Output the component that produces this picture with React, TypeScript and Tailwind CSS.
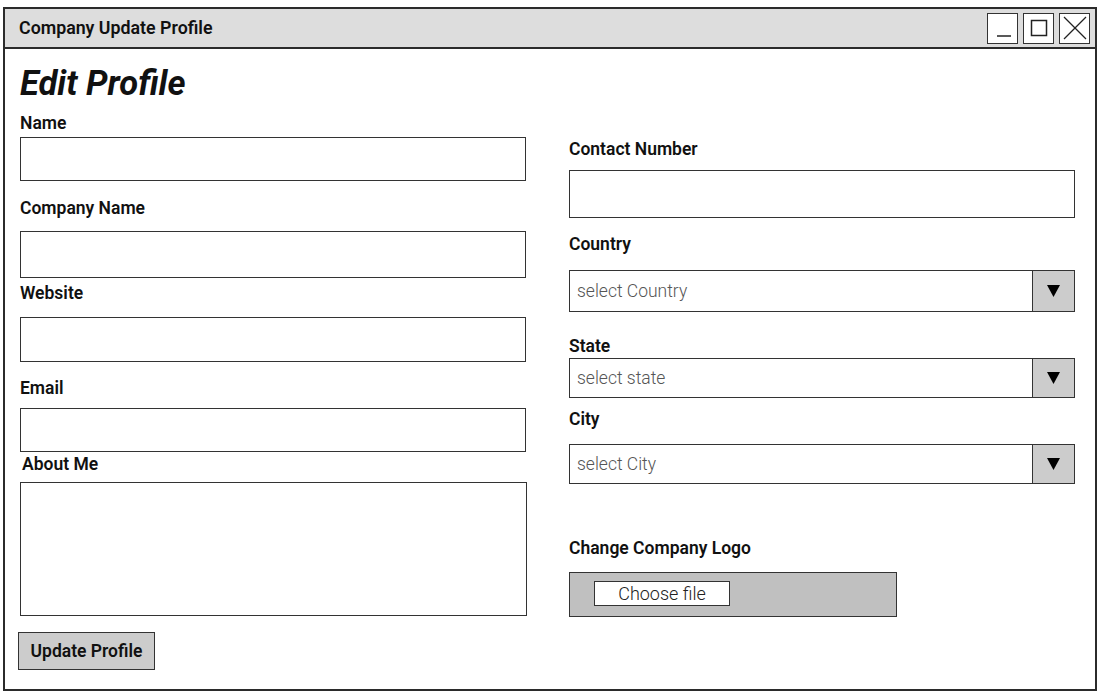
import React from "react";

const font = { fontFamily: "Roboto, 'Noto Sans', sans-serif" };

function Label({ children, className = "" }: { children: React.ReactNode; className?: string }) {
  return (
    <div className={"h-[20px] leading-[20px] text-[17.5px] font-semibold text-[#111] " + className}>
      {children}
    </div>
  );
}

function Select({ text, className = "" }: { text: string; className?: string }) {
  return (
    <div className={"flex border border-[#333] bg-white " + className}>
      <div className="flex-1 flex items-center pl-[7px] text-[17.5px] font-light text-[#555]">{text}</div>
      <div className="w-[42px] border-l border-[#333] bg-[#cccccc] flex items-center justify-center">
        <svg width="13" height="12" viewBox="0 0 13 12">
          <polygon points="0,0 13,0 6.5,12" fill="#000" />
        </svg>
      </div>
    </div>
  );
}

function WinBtn({ children }: { children: React.ReactNode }) {
  return (
    <div className="w-[31px] h-[31px] border-[1.5px] border-[#333] bg-white flex items-center justify-center">
      {children}
    </div>
  );
}

export default function App() {
  return (
    <div className="w-[1102px] h-[697px] bg-white overflow-hidden" style={font}>
      <div className="ml-[3px] mt-[7px] w-[1094px] h-[684px] border-2 border-[#2b2b2b] flex flex-col">
        <div className="h-[40px] bg-[#dddddd] border-b-2 border-[#2b2b2b] flex items-center pl-[14px] pr-[5px]">
          <div className="flex-1 text-[17.8px] font-semibold text-[#111]">Company Update Profile</div>
          <div className="flex gap-[5px]">
            <WinBtn>
              <svg width="28" height="28" viewBox="0 0 28 28">
                <line x1="8" y1="22" x2="22" y2="22" stroke="#222" strokeWidth="1.5" />
              </svg>
            </WinBtn>
            <WinBtn>
              <svg width="28" height="28" viewBox="0 0 28 28">
                <rect x="6.5" y="6.5" width="15" height="15" fill="none" stroke="#222" strokeWidth="1.5" />
              </svg>
            </WinBtn>
            <WinBtn>
              <svg width="28" height="28" viewBox="0 0 28 28">
                <line x1="3" y1="3" x2="25" y2="25" stroke="#222" strokeWidth="1.3" />
                <line x1="25" y1="3" x2="3" y2="25" stroke="#222" strokeWidth="1.3" />
              </svg>
            </WinBtn>
          </div>
        </div>
        <div className="flex pl-[15px]">
          <div className="w-[507px] flex flex-col">
            <div className="mt-[16px] h-[36px] leading-[36px] text-[34.5px] font-bold italic text-[#111]">Edit Profile</div>
            <Label className="mt-[12px]">Name</Label>
            <div className="mt-[4px] h-[44px] w-[506px] border border-[#333]" />
            <Label className="mt-[17px]">Company Name</Label>
            <div className="mt-[13px] h-[47px] w-[506px] border border-[#333]" />
            <Label className="mt-[5px]">Website</Label>
            <div className="mt-[14px] h-[45px] w-[506px] border border-[#333]" />
            <Label className="mt-[16px]">Email</Label>
            <div className="mt-[10px] h-[44px] w-[506px] border border-[#333]" />
            <Label className="mt-[2px] ml-[2px]">About Me</Label>
            <div className="mt-[8px] h-[134px] w-[507px] border border-[#333]" />
            <div className="mt-[16px] ml-[-2px] h-[38px] w-[137px] border-[1.5px] border-[#333] bg-[#cccccc] flex items-center justify-center text-[17.5px] font-semibold text-[#111]">
              Update Profile
            </div>
          </div>
          <div className="ml-[42px] w-[506px] flex flex-col">
            <Label className="mt-[90px]">Contact Number</Label>
            <div className="mt-[11px] h-[48px] border border-[#333]" />
            <Label className="mt-[16px]">Country</Label>
            <Select className="mt-[16px] h-[42px]" text="select Country" />
            <Label className="mt-[24px]">State</Label>
            <Select className="mt-[2px] h-[40px]" text="select state" />
            <Label className="mt-[11px]">City</Label>
            <Select className="mt-[15px] h-[40px]" text="select City" />
            <Label className="mt-[54px]">Change Company Logo</Label>
            <div className="mt-[14px] h-[45px] w-[328px] border border-[#333] bg-[#c0c0c0] pl-[24px] pt-[8px]">
              <div className="w-[136px] h-[25px] border border-[#333] bg-white flex items-center justify-center text-[18px] font-light text-[#222]">
                Choose file
              </div>
            </div>
          </div>
        </div>
      </div>
    </div>
  );
}
